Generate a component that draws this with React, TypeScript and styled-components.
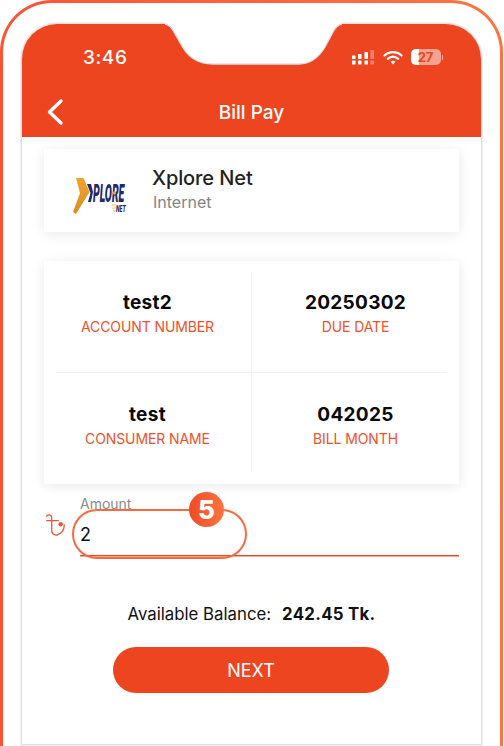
import { createGlobalStyle, styled } from "styled-components";

const ORANGE = "#ec4520";
const NOTCH_EDGE = "M4 2 C9 2.5 11 6 13 10 L21 24 C27 35 37 42 52 42 L138 42 C150 42 158 35 164 25 L172 10 C174 6 176 2.5 181 2";

const GlobalStyle = createGlobalStyle`
  html, body {
    margin: 0;
    padding: 0;
    background: #fff;
  }
  body {
    font-family: Inter, "Liberation Sans", sans-serif;
    -webkit-font-smoothing: antialiased;
  }
`;

const details = [
  { value: "test2", label: "ACCOUNT NUMBER" },
  { value: "20250302", label: "DUE DATE" },
  { value: "test", label: "CONSUMER NAME" },
  { value: "042025", label: "BILL MONTH" },
];

const Notch = () => (
  <St.Notch width="200" height="44" viewBox="0 0 200 44">
    <path d={`${NOTCH_EDGE} L181 0 L4 0 Z`} fill="#fff" />
    <path d={NOTCH_EDGE} fill="none" stroke="#dfe1e3" strokeWidth="1.4" />
  </St.Notch>
);

const StatusIcons = () => (
  <St.StatusIcons>
    <St.Signal width="22" height="15" viewBox="0 0 22 15">
      <g fill="#fff">
        <rect x="0" y="5.5" width="3.5" height="3.5" rx="0.6" />
        <rect x="0" y="10.5" width="3.5" height="4" rx="0.6" />
        <rect x="6" y="4" width="3.5" height="5" rx="0.6" />
        <rect x="6" y="10.5" width="3.5" height="4" rx="0.6" />
        <rect x="12.5" y="2" width="3.5" height="7" rx="0.6" />
        <rect x="12.5" y="10.5" width="3.5" height="4" rx="0.6" />
      </g>
      <g fill="#fff" opacity="0.35">
        <rect x="18.5" y="0" width="3.5" height="9" rx="0.6" />
        <rect x="18.5" y="10.5" width="3.5" height="4" rx="0.6" />
      </g>
    </St.Signal>
    <svg width="20" height="15" viewBox="0 0 20 15">
      <path d="M1.5 5.5 C6 1 14 1 18.5 5.5" fill="none" stroke="#fff" strokeWidth="2.2" strokeLinecap="round" />
      <path d="M4.8 8.8 C8 6 12 6 15.2 8.8" fill="none" stroke="#fff" strokeWidth="2.2" strokeLinecap="round" />
      <path d="M7.6 11.8 L10 14.4 L12.4 11.8 C11 10.4 9 10.4 7.6 11.8 Z" fill="#fff" />
    </svg>
    <St.Battery>
      <St.BatteryLevel />
      <St.BatteryText>27</St.BatteryText>
    </St.Battery>
    <St.BatteryTip />
  </St.StatusIcons>
);

const Logo = () => (
  <St.Logo width="62" height="42" viewBox="0 0 62 42">
    <defs>
      <linearGradient id="chevron" x1="0" y1="0" x2="0" y2="1">
        <stop offset="0" stopColor="#f0a32e" />
        <stop offset="1" stopColor="#d98f22" />
      </linearGradient>
    </defs>
    <path d="M4 5 L11.5 5 L17.5 19 L4 41 L1 39 L8 20 Z" fill="url(#chevron)" />
    <path d="M15 11 L19 11 L21 19 L19 29 L16 29 L18.5 20 Z" fill="#1d2a6b" />
    <text
      transform="translate(21 29) scale(0.68 1.6)"
      fontFamily="Roboto, sans-serif"
      fontSize="15.5"
      fontStyle="italic"
      fontWeight="900"
      fill="#1d2a6b"
    >
      PLORE
    </text>
    <circle cx="42.5" cy="20" r="1.7" fill="#f0a32e" />
    <text
      transform="translate(44 38.5) scale(0.8 1.4)"
      fontFamily="Roboto, sans-serif"
      fontSize="6.5"
      fontStyle="italic"
      fontWeight="900"
      fill="#1d2a6b"
    >
      NET
    </text>
    <path d="M40 32 h3.5 M40.5 35 h3 M41 38 h2.5" stroke="#f0b52e" strokeWidth="1.1" />
  </St.Logo>
);

const TakaIcon = () => (
  <St.Taka width="20" height="24" viewBox="0 0 20 24">
    <path
      d="M0.7 2 C2 0.5 5 0 5.7 3 L5.7 16 C5.7 20 8 21.3 11 21 C15 20.5 18.3 16 18.3 11 M0.7 6.7 L12.3 6.7"
      fill="none"
      stroke="#f0532d"
      strokeWidth="1.3"
      strokeLinecap="round"
    />
    <circle cx="14.7" cy="10.3" r="2.2" fill="#f0532d" />
  </St.Taka>
);

const App = () => {
  return (
    <>
      <GlobalStyle />
      <St.Phone>
        <St.Screen>
          <St.Header>
            <St.StatusBar>
              <St.Time>3:46</St.Time>
              <StatusIcons />
            </St.StatusBar>
            <St.NavBar>
              <St.BackIcon width="18" height="28" viewBox="0 0 18 28">
                <path d="M15 3 L3.5 14 L15 25" fill="none" stroke="#fff" strokeWidth="3.4" strokeLinecap="round" strokeLinejoin="round" />
              </St.BackIcon>
              <St.Title>Bill Pay</St.Title>
            </St.NavBar>
          </St.Header>
          <St.Body>
            <St.MerchantCard>
              <Logo />
              <St.MerchantText>
                <St.MerchantName>Xplore Net</St.MerchantName>
                <St.MerchantType>Internet</St.MerchantType>
              </St.MerchantText>
            </St.MerchantCard>
            <St.InfoCard>
              {details.map((item, i) => (
                <St.InfoCell key={item.label} $right={i % 2 === 1} $bottom={i > 1}>
                  <St.InfoValue>{item.value}</St.InfoValue>
                  <St.InfoLabel>{item.label}</St.InfoLabel>
                </St.InfoCell>
              ))}
            </St.InfoCard>
            <St.AmountRow>
              <TakaIcon />
              <St.AmountField>
                <St.AmountLabel>Amount</St.AmountLabel>
                <St.AmountValue>2</St.AmountValue>
              </St.AmountField>
              <St.Highlight />
              <St.StepBadge>5</St.StepBadge>
            </St.AmountRow>
            <St.Balance>
              Available Balance:
              <St.BalanceValue>242.45 Tk.</St.BalanceValue>
            </St.Balance>
            <St.NextButton>NEXT</St.NextButton>
          </St.Body>
        </St.Screen>
        <Notch />
      </St.Phone>
    </>
  );
};

export default App;

const St = {
  Phone: styled.div`
    position: relative;
    box-sizing: border-box;
    width: 503px;
    height: 746px;
    padding: 20px 18px 1px;
    border: 3px solid transparent;
    border-bottom: 0;
    border-radius: 52px 52px 0 0;
    background:
      linear-gradient(#fff, #fff) padding-box,
      linear-gradient(90deg, #fb5334, #ff7343) border-box;
  `,
  Screen: styled.div`
    box-sizing: border-box;
    height: 100%;
    border: 1px solid #e0e0e0;
    border-radius: 36px 36px 0 0;
    box-shadow: 0 0 0 1px #f0f0f0;
    background: #fff;
    overflow: hidden;
    display: flex;
    flex-direction: column;
  `,
  Header: styled.header`
    flex: none;
    height: 113px;
    background: ${ORANGE};
  `,
  Notch: styled.svg`
    position: absolute;
    top: 19px;
    left: 158px;
  `,
  StatusBar: styled.div`
    display: flex;
    align-items: center;
    justify-content: space-between;
    height: 20px;
    padding: 23px 38px 0 61px;
  `,
  Time: styled.span`
    color: #fff;
    font-size: 19px;
    font-weight: 500;
    letter-spacing: 0.6px;
  `,
  StatusIcons: styled.div`
    display: flex;
    align-items: center;
  `,
  Signal: styled.svg`
    margin-right: 9px;
  `,
  Battery: styled.div`
    position: relative;
    width: 30px;
    height: 16px;
    margin-left: 8px;
    border-radius: 5px;
    background: rgba(255, 255, 255, 0.5);
    overflow: hidden;
  `,
  BatteryLevel: styled.div`
    width: 8px;
    height: 100%;
    background: #fff;
  `,
  BatteryText: styled.span`
    position: absolute;
    inset: 0;
    text-align: center;
    color: ${ORANGE};
    font-size: 13px;
    line-height: 16px;
    font-weight: 700;
  `,
  BatteryTip: styled.div`
    width: 1.5px;
    height: 5px;
    margin-left: 1px;
    border-radius: 0 1px 1px 0;
    background: rgba(255, 255, 255, 0.6);
  `,
  NavBar: styled.div`
    display: grid;
    grid-template-columns: 1fr auto 1fr;
    align-items: center;
    height: 50px;
    margin-top: 20px;
    padding: 0 24px;
  `,
  BackIcon: styled.svg`
    display: block;
  `,
  Title: styled.h1`
    margin: 0;
    color: #fff;
    font-size: 19px;
    font-weight: 500;
  `,
  Body: styled.main`
    flex: 1;
    display: flex;
    flex-direction: column;
    padding: 12px 22px 0;
  `,
  MerchantCard: styled.section`
    display: flex;
    align-items: center;
    height: 83px;
    padding-left: 28px;
    background: #fff;
    box-shadow: 0 2px 12px rgba(0, 0, 0, 0.09);
  `,
  Logo: styled.svg`
    flex: none;
    margin-top: 6px;
  `,
  MerchantText: styled.div`
    display: flex;
    flex-direction: column;
    margin: -5px 0 0 18px;
  `,
  MerchantName: styled.span`
    color: #222;
    font-size: 20px;
    font-weight: 500;
    letter-spacing: -0.1px;
    line-height: 26px;
  `,
  MerchantType: styled.span`
    margin-top: 1px;
    margin-left: 1px;
    color: #858585;
    font-size: 16px;
    line-height: 20px;
  `,
  InfoCard: styled.section`
    display: grid;
    grid-template-columns: 195px 196px;
    grid-auto-rows: 100px;
    margin-top: 29px;
    height: 223px;
    box-sizing: border-box;
    padding: 11px 12px;
    background: #fff;
    box-shadow: 0 2px 12px rgba(0, 0, 0, 0.09);
  `,
  InfoCell: styled.div<{ $right: boolean; $bottom: boolean }>`
    box-sizing: border-box;
    display: flex;
    flex-direction: column;
    align-items: center;
    padding-top: ${(p) => (p.$bottom ? 31 : 20)}px;
    padding-right: ${(p) => (p.$right ? 0 : 12)}px;
    padding-left: ${(p) => (p.$right ? 12 : 0)}px;
    border-left: ${(p) => (p.$right ? "1px solid #f0f0f4" : "0")};
    border-top: ${(p) => (p.$bottom ? "1px solid #f0f0f4" : "0")};
  `,
  InfoValue: styled.span`
    color: #0a0a0a;
    font-size: 19px;
    font-weight: 700;
    letter-spacing: 0.3px;
    line-height: 22px;
  `,
  InfoLabel: styled.span`
    margin-top: 3px;
    color: #f0512b;
    font-size: 14px;
    letter-spacing: -0.1px;
    line-height: 20px;
  `,
  AmountRow: styled.div`
    position: relative;
    display: flex;
    align-items: flex-end;
    margin-top: 12px;
  `,
  Taka: styled.svg`
    flex: none;
    margin: 0 14px 18px 2px;
  `,
  AmountField: styled.div`
    flex: 1;
    display: flex;
    flex-direction: column;
    height: 59px;
    border-bottom: 1px solid ${ORANGE};
    box-shadow: 0 1px 0 rgba(236, 69, 32, 0.45);
  `,
  AmountLabel: styled.span`
    margin-top: -1px;
    color: #8a8a8a;
    font-size: 14px;
    line-height: 18px;
  `,
  AmountValue: styled.span`
    margin-top: 10px;
    color: #111;
    font-size: 18px;
    line-height: 24px;
  `,
  Highlight: styled.div`
    position: absolute;
    top: 13px;
    left: 28px;
    box-sizing: border-box;
    width: 175px;
    height: 50px;
    border: 2px solid #f96a3f;
    border-radius: 25px;
  `,
  StepBadge: styled.div`
    position: absolute;
    top: -4px;
    left: 145px;
    display: flex;
    align-items: center;
    justify-content: center;
    width: 35px;
    height: 35px;
    border-radius: 50%;
    background: linear-gradient(90deg, #ee4a24, #ff7343);
    color: #fff;
    font-size: 26px;
    font-weight: 800;
  `,
  Balance: styled.p`
    margin: 47px 0 0;
    color: #111;
    font-size: 16.8px;
    line-height: 22px;
    text-align: center;
  `,
  BalanceValue: styled.strong`
    margin-left: 11px;
    font-weight: 700;
    letter-spacing: 0.3px;
  `,
  NextButton: styled.button`
    align-self: center;
    width: 276px;
    height: 46px;
    margin: 22px 1px 0 0;
    border: 0;
    border-radius: 23px;
    background: ${ORANGE};
    color: #fff;
    font-family: inherit;
    font-size: 18px;
    font-weight: 400;
  `,
};
